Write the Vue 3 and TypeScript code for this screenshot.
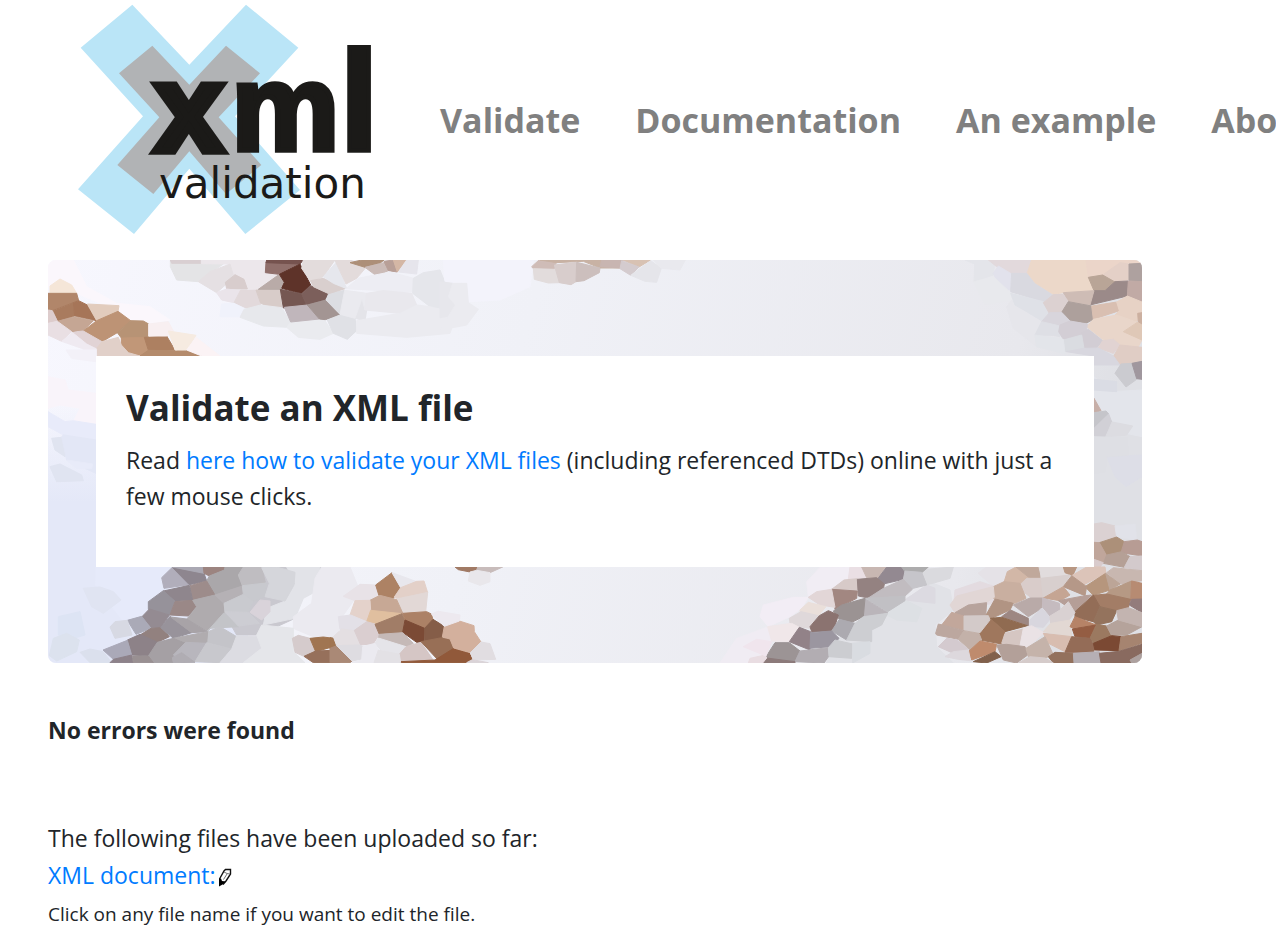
<script setup lang="ts">
interface Cell {
  fill: string
  points: string
}
interface Patch {
  x: number
  y: number
  cells: Cell[]
}

function cells(source: string): Cell[] {
  return source
    .trim()
    .split('\n')
    .map((line) => {
      const [fill, ...points] = line.trim().split(' ')
      return { fill: '#' + fill, points: points.join(' ') }
    })
}

const patches: Patch[] = [
  {
    x: -24,
    y: -30,
    cells: cells(`
      fbf7fc 24,30 100,30 140,110 230,160 330,170 390,210 330,220 270,210 230,180 110,130 24,110
      e4e4e6 391,30 484,40 550,42 510,70 475,95 410,90 391,50
      d9cfd2 391,30 484,30 484,40 395,40
      ece7eb 484,30 680,30 676,68 720,75 655,118 620,115 580,75 570,42 484,41
      e5e0e3 510,65 570,42 580,75 556,105 530,128 475,95
      d8cdcd 556,97 585,74 612,88 622,117 560,117
      eae4ea 530,128 560,117 602,122 582,158 545,150
      e2d9db 602,120 648,120 662,165 612,178 582,158
      d8ccc9 648,120 720,118 725,173 690,172 662,160
      f0f2fb 545,162 582,160 620,178 600,200 540,200
      e7e8ec 612,178 662,165 725,173 752,216 740,232 670,228 600,202
      eaebef 740,232 752,216 850,205 880,250 840,268 775,262
      906f6b 678,36 780,40 718,73 676,68
      76534f 680,30 790,30 780,42 678,38
      b9aba8 718,73 733,97 721,118 655,118
      5e3329 718,73 780,42 812,105 785,131 725,115 733,97
      755752 721,118 785,131 800,165 730,174
      7c5f5b 785,131 812,107 866,131 855,150 800,165
      c0b6bb 733,172 802,165 838,207 752,216
      a39593 802,165 858,150 900,195 856,209 838,207
      dcdde2 866,131 914,121 912,190 900,193 858,150
      e0e1e6 862,210 900,195 945,205 950,242 922,268 880,250
      e4e4e9 945,205 966,145 980,180 975,212
      e3dcdc 790,30 885,30 850,80 812,95 785,55
      d9cfce 812,92 850,85 915,116 866,131 820,110
      e6e7ed 850,80 888,38 920,116 880,100
      e3dbdb 885,30 930,30 980,50 950,85 918,102 888,38
      ad8f78 930,38 965,30 1032,30 1020,40 975,52
      cbbbb7 975,52 1032,38 1045,62 1010,78
      b89f97 1032,34 1060,30 1072,66 1045,62
      d4b7a5 1060,30 1100,30 1072,66
      e6e5ec 1100,30 1135,30 1130,72 1075,66
      ededf3 918,116 955,85 1050,66 1120,85 1115,125 1030,122
      e5e6eb 1120,85 1150,68 1200,60 1216,100 1200,175 1170,170 1118,130
      eaeaef 914,121 980,130 975,180 966,145 945,205 900,193
      e9e8ed 980,130 1030,122 1115,130 1130,165 1080,190 975,180
      ebebf0 950,212 1080,190 1130,165 1170,170 1250,190 1230,250 1100,262 950,250
      f5e6d8 30,108 60,87 95,105 110,130 30,134
      b1866a 24,130 110,130 116,152 100,158 35,182 24,178
      a97b5e 38,182 100,158 104,198 55,214
      a67558 100,158 116,152 142,165 170,212 104,198
      e2ccbd 142,162 237,167 234,184 170,212
      ddcccc 24,180 37,182 52,214 24,220
      c5a694 52,214 104,200 160,212 130,243 95,245 62,225
      bd9375 130,243 170,212 234,184 272,212 232,248 186,275
      b79375 232,248 272,212 310,213 326,222 326,258 300,275 244,264
      c19778 244,264 315,262 325,305 300,318 265,308 244,285
      ad8061 313,262 380,258 405,300 325,301
      b48b6c 300,318 325,301 410,302 435,300 485,318
      e9dfe3 24,220 52,214 95,245 65,274 24,255
      e1d3d5 110,245 130,243 186,275 170,295 140,282 98,248
      e1d0c9 170,295 186,275 235,262 244,285 265,308 300,318 172,318
      efeaf1 65,274 98,248 140,282 170,297 168,318 125,295
      f8eff1 326,222 385,215 400,243 380,258 326,258
      f6ebe1 385,243 468,256 440,300 405,300
      fbf3f5 440,300 468,262 540,318 485,318
    `),
  },
  {
    x: 1176,
    y: -30,
    cells: cells(`
      f3f3fb 10,30 280,30 270,110 180,150 85,155 75,100 15,95
      e7e7ec 0,95 38,100 25,140 46,165 30,197 0,203
      ebebf0 38,100 80,100 85,158 115,178 80,225 0,240 46,165 25,140
      cfbcb7 275,50 297,30 350,35 342,58 280,56
      c8b2a4 300,30 545,30 540,54 480,54 430,34 350,38
      e2dcdc 280,56 345,58 358,98 325,99 283,88
      d8cdcc 343,45 410,37 408,95 393,104 358,98
      ccbfbd 410,37 480,54 478,68 432,92 408,95
      c8b5b1 480,50 485,30 548,30 540,54
      d8c2b3 548,30 632,30 597,51
      d4cbce 545,32 597,51 572,76 540,56
      e5e5ea 572,76 632,32 664,55 650,97 615,94
      e9e9ee 640,30 736,30 720,60 664,55
    `),
  },
  {
    x: 2196,
    y: -30,
    cells: cells(`
      e4e5ea 555,30 645,30 640,75 582,95 584,42
      e2d9dc 625,30 755,30 742,68 695,72 650,50
      e2e2ec 640,70 655,48 695,72 692,120 660,115
      d9d9e0 695,70 742,70 765,98 820,135 790,155 692,125
      e8e9ed 582,95 640,80 692,128 695,150 615,163
      e6e6eb 695,150 740,185 785,212 765,255 770,290 700,235 680,170
      dfe1e7 692,130 790,155 808,185 785,212 740,185 705,165
      ecd8c9 755,30 918,30 942,122 850,128 820,133 765,98 742,68
      ebd5c9 918,30 1075,30 1086,42 1045,40 968,75 925,82
      e4d0c7 968,75 1020,38 1047,42 1045,90 1000,95
      aea19f 1047,42 1086,40 1086,95 1047,92
      b9a597 925,82 968,75 1005,96 975,122 942,122
      9b8a89 930,165 942,122 975,122 1005,95 1045,93 1042,138
      c1aaa5 1045,93 1086,95 1086,156 1042,138
      cebcb5 850,128 942,122 930,165 865,155
      dcd1d1 790,158 820,134 850,133 865,155 845,187 808,190
      ada09c 845,187 865,155 935,168 940,208 920,219 870,213
      d9bfb1 935,168 1010,156 1018,182 940,208
      e7d2c5 1010,156 1042,138 1086,156 1086,190 1070,215 1000,200 1018,182
      e9d6ca 920,230 940,208 1010,195 1080,220 1030,245 1086,270 1075,290 1020,285 968,268
      dfc8b7 1030,245 1075,215 1086,222 1086,270
      ccb0a0 1073,190 1086,188 1086,222 1075,215
      d8d5dc 785,215 808,188 845,187 870,213 840,228
      dedfe5 765,255 785,215 840,228 840,260 820,256
      d3ced5 840,225 870,213 922,222 920,238 905,255 850,268 836,245
      d2cdd4 905,250 925,238 968,272 945,300 912,293
      dadce1 843,272 905,255 912,295 855,305
      e3e5ea 765,255 850,268 855,310 770,290
      e1d3d2 955,294 968,272 1000,268 1020,285 1000,310
      e0cdc5 1000,320 1020,285 1086,292 1086,330 1055,345 1020,345
      d8d7df 860,305 912,295 955,294 1000,318 1020,345 942,345 942,318
    `),
  },
  {
    x: 3096,
    y: 240,
    cells: cells(`
      e3e5eb 42,110 95,155 186,150 186,290 90,270 65,210 42,170
      cbcbd0 105,100 123,72 156,70 170,118 138,141
      a0979e 156,70 186,64 186,118 170,116
      c7afa8 42,175 63,212 42,218
      c5c5ca 42,218 78,213 86,222 42,265
      d1d0d6 42,265 86,222 96,248 77,290 42,292
      dcdce1 86,270 96,246 158,258 140,285 77,290
      dddee7 80,350 186,345 186,410 138,440 105,410
      dadce4 42,118 110,125 110,155 42,150
      dedfe4 42,290 140,293 145,345 80,350 75,395 42,400
    `),
  },
  {
    x: -24,
    y: 270,
    cells: cells(`
      f3f1f8 78,0 168,0 168,35 95,25
      f9f4fa 24,80 75,90 85,120 168,130 168,222 100,215 120,175 60,165 24,175
      e8ebfa 24,185 75,215 100,212 168,223 168,270 70,255 24,230
      e0e4f0 35,265 65,262 93,300 75,320 45,300
      e0e4f1 30,350 60,342 125,375 130,392 50,395
      e3e7f6 70,255 168,270 168,370 80,330 65,260
      e8ebf9 80,330 158,342 155,356 110,355
    `),
  },
  {
    x: -24,
    y: 885,
    cells: cells(`
      e6eafa 168,36 395,36 365,70 370,108 325,140 325,180 250,200 165,90
      e0e4f2 130,100 180,96 220,110 243,135 190,175 155,155
      dde4f4 55,185 120,170 135,240 100,250 55,240
      dce2ee 40,250 80,235 118,255 110,290 50,318 28,302
      dbe0ed 120,292 150,282 190,290 215,323 150,323
      c9c8cf 560,36 850,36 830,75 840,100 780,130 765,190 700,220 660,240 590,240 550,170 595,65
      e2e3e8 740,36 840,36 830,75 845,100 790,130 765,190 670,210 680,160 735,138 765,85
      ebeaf0 825,70 845,36 930,36 960,110 910,180 890,245 820,245 760,220 760,185 815,145
      b1aebb 372,100 365,68 397,37 448,89
      8e868f 397,37 492,55 500,78 448,89
      aaa8b3 397,36 490,36 492,55
      9c8480 490,36 556,36 553,45 508,63 492,55
      aaa7aa 500,78 508,63 553,45 555,36 610,36 595,65 607,92 525,120
      9d8c8b 450,92 500,78 525,120 458,136
      8f868d 370,108 448,91 458,136 405,139
      96929a 325,140 370,107 405,139 390,180 325,163
      9a8887 390,180 405,140 458,136 470,155 445,183
      afabae 458,136 525,120 552,145 552,175 503,228 440,193 470,155
      b5b1b5 525,120 607,93 612,118 552,145
      bfbdc1 595,60 610,36 665,38 676,82 607,92
      c8c9ce 607,92 680,84 675,125 640,139 610,118
      c9cacf 552,145 610,118 640,140 625,172 555,170
      d9d3da 630,172 660,135 690,138 690,170 665,195
      d5d6db 665,38 710,36 765,52 762,90 735,138 675,125 688,85
      948b92 305,186 328,162 388,180 362,220 333,218
      aaaab7 262,196 305,184 333,220 288,238
      d7d9e3 210,216 225,200 262,196 276,240 225,250
      92817f 300,240 333,220 365,218 388,245 350,263
      98939b 362,218 390,184 455,233 400,250
      a8a3a7 392,186 440,192 503,230 455,233
      c3c4c8 503,228 552,173 595,215 510,220
      cdcdd3 555,170 625,172 658,205 595,213
      c4c4c9 500,232 540,215 590,245 575,282 497,262
      b0acaf 400,250 503,230 500,265 440,265
      8d8288 262,255 300,238 355,263 350,285 325,303 275,300
      aaa9b8 189,285 262,256 275,300 220,313
      a5a0a4 325,303 352,262 400,250 437,265 397,310 400,323 340,323
      b8b6bd 400,300 437,262 500,265 465,320
      c8c8cd 465,320 500,263 575,282 540,323
      8d828a 210,323 220,313 275,300 280,323
      999092 278,303 325,303 340,323 280,323
      b0adb3 400,323 397,308 425,293 465,322
      dcdce2 540,323 575,282 590,242 660,244 665,280 610,323
      e5e6ea 650,240 665,210 760,220 760,290 795,323 610,323 665,280
      d5cbcc 757,250 775,241 810,250 827,290 792,304 765,292
      a07551 810,250 850,246 880,250 890,272 827,290
      96705b 792,304 827,288 875,286 880,323 820,323
      aa8976 875,286 890,272 900,275 900,323 880,323
    `),
  },
  {
    x: 846,
    y: 885,
    cells: cells(`
      a07551 0,248 10,250 20,272 0,282
      aa8976 0,280 20,272 66,318 60,323 0,323
      e8e2e7 40,124 90,88 137,90 147,122 120,135 75,137
      ad8264 137,90 186,53 212,98 190,130 147,122
      e8e7ed 186,53 260,80 212,98
      e3d0c8 212,98 260,79 282,78 293,113 200,130 193,126
      e2d8d6 200,132 293,112 287,170 218,174
      c7a895 120,136 150,121 200,134 218,174 190,180 122,165
      e4d2cb 60,180 75,137 120,136 122,166 110,200
      e0bf9f 110,200 122,166 216,176 135,208
      e3e0e7 25,185 62,180 110,200 75,228 30,224
      e4dfe2 10,245 35,222 75,228 90,270 20,272
      daced0 73,226 110,200 135,207 148,238 130,266 92,270
      a17d67 135,208 216,176 224,195 218,233 148,238
      ac8166 218,175 290,170 304,177 309,194 284,220 225,195
      7b4a35 225,195 284,220 282,260 260,262 218,232
      855d48 284,220 309,193 343,214 337,248 284,260
      c5b9b7 148,238 218,233 250,265 230,275 145,249
      e5e4e9 135,265 145,249 228,275 208,298 150,283
      d5c6c5 208,298 228,275 273,262 308,313 290,318 212,320
      986f56 273,260 335,248 360,252 371,280 324,315
      91593a 212,320 315,315 371,280 418,294 427,313 410,323 210,323
      d3b09d 343,214 388,198 432,212 433,230 453,261 421,293 371,279 360,252 337,246
      e1dde1 421,293 453,261 480,266 497,313 430,315
      dad3d7 410,323 427,314 475,323
      ede9ef 304,177 325,169 390,180 388,198 343,214
      dedce1 20,272 90,270 98,275 95,312 66,318
      ebeaf0 95,315 98,275 135,265 145,285 132,323 66,323
      e3e1e5 132,323 145,285 208,298 212,323
      a17a65 375,36 443,36 440,46 420,51 385,44
      c8bcbb 443,36 518,36 480,53 440,46
      e9e7eb 420,51 440,46 480,53 480,80 450,91 415,78
    `),
  },
  {
    x: 2016,
    y: 750,
    cells: cells(`
      f1edf4 260,215 300,172 390,171 385,208 340,238 265,262
      f2edf5 120,320 130,285 220,262 265,262 245,295 210,320 145,350
      f0ecf3 0,459 50,385 145,350 155,395 140,430 90,459
      e1e2e7 440,350 560,265 640,220 690,240 700,300 645,345 650,410 700,459 320,459 340,390
      dadade 590,180 700,171 690,205 620,225
      dcdae1 555,270 620,225 645,235 645,280
      dde0e4 490,310 555,270 605,295 590,335 530,330
      eadfe4 390,171 425,171 440,203 385,208
      c8b7b2 425,171 497,171 472,208 440,203
      938991 472,208 500,171 545,171 555,185 550,208 490,222
      adacad 545,171 625,171 605,188 555,185
      c6c5ca 550,208 555,183 605,187 620,225 575,236
      d7cac8 335,238 372,210 412,206 415,240
      948281 412,208 470,203 493,222 490,238 445,264 415,258
      c1bcc0 445,264 490,235 550,208 577,238 555,258
      a28781 335,238 412,243 410,265 345,298
      e2d6d7 265,262 290,245 335,238 345,292 300,285
      eadfda 240,300 265,277 318,290 295,317 240,305
      c1c0c4 435,265 555,258 555,272 503,305
      bab5ba 435,267 503,308 430,320
      9b9393 340,303 365,285 435,265 430,320 395,337 358,328
      dfd8da 208,325 243,305 295,317 270,355 235,350 210,340
      8b7370 270,350 298,317 325,302 355,315 340,363 275,365
      acaab0 335,363 358,328 405,340 380,390
      cdced2 405,340 430,320 503,310 485,345 455,360 455,395 380,390
      f0e7e9 143,350 215,340 238,352 210,395 155,393
      928288 208,395 238,352 272,365 270,420
      9b96a0 272,368 335,363 357,385 335,410 270,415
      9c9495 138,440 165,398 208,398 240,423 225,455 155,450
      b2adb2 225,455 240,423 325,413 327,438 312,459
      cccdd1 325,413 345,390 398,402 395,445 327,440
      8c7a7a 128,459 140,444 225,455 225,459
      e9dde2 90,445 135,435 140,444 128,459 85,459
      f0e5ed 70,410 110,388 155,395 138,438
      d9dce1 398,400 450,395 450,430 398,459
      dbd1d2 1122,42 1145,38 1185,48 1190,80 1140,95 1122,95
      e1e2e9 1185,48 1246,42 1250,90 1190,82
      ac9079 1138,98 1190,81 1213,95 1205,125 1160,137
      b79c94 1213,95 1252,90 1266,95 1266,138 1203,128
      c0a69b 1122,97 1138,98 1160,137 1150,158 1122,148
      b5a096 1160,135 1205,125 1230,140 1213,172 1150,160
      d3cacc 1230,140 1266,138 1266,182 1213,172
      d9cbcc 1122,148 1150,158 1140,171 1122,171
      e5e2e7 775,190 800,171 888,171 855,215 822,230
      e3dbe0 705,240 780,215 825,230 820,280 700,300
      d2b7a7 852,217 862,185 888,171 930,205 900,222
      c0a89b 888,171 960,171 960,204 930,205
      e1dcdd 957,171 1030,171 1048,195 965,205
      b89782 1030,171 1070,171 1058,197 1035,188
      dcc4b9 1055,197 1100,171 1155,171 1158,190 1090,225
      c8b7b0 1160,188 1180,173 1266,182 1266,212 1200,222
      b6967d 1095,230 1157,190 1170,240 1120,256
      bca597 1157,190 1200,222 1170,240
      b69984 1170,240 1235,213 1232,268 1160,252
      b78b72 1235,213 1266,220 1266,268 1232,270
      d9ccca 892,232 920,205 963,205 970,264 935,264
      d8cfce 963,205 1050,195 1030,230 970,264
      b59888 1030,230 1055,197 1100,230 1095,257
      c5a593 970,264 1030,230 1050,255 1020,272
      c9afa0 820,230 852,215 900,220 918,265 885,280 820,265
      e1d6d5 690,285 710,258 820,230 823,262 795,280 705,308
      b59e97 1015,272 1095,257 1115,255 1065,305
      a37d66 1120,256 1160,252 1232,268 1225,293 1190,302 1140,290
      936d57 1065,305 1120,255 1140,290 1120,335 1065,322
      94735d 1120,335 1140,290 1190,302 1175,335 1130,345
      937c7c 1228,285 1235,268 1266,267 1266,308
      b7a39c 705,308 745,285 800,278 797,317 715,317
      b19483 797,317 825,267 880,280 870,300 815,325
      b9aaa8 880,285 930,264 968,264 965,295 925,320
      c5bbbf 968,264 1018,280 1020,300 990,318 968,292
      d8d6de 925,335 965,294 992,325 970,352 925,348
      d9d1d2 990,318 1020,300 1045,275 1065,308 1045,332 992,340
      9d8782 845,320 872,300 925,325 925,347
      906b51 810,325 845,322 922,347 855,365
      9f775d 777,373 810,325 855,365 845,402 780,390
      c2a79b 665,345 695,307 732,318 732,360
      d3cac9 732,318 805,317 810,330 780,368 732,360
      bca79f 647,370 655,342 732,362 715,388 650,375
      c3b1a9 715,388 732,362 777,370 785,390 750,420
      d4cacf 655,410 680,385 712,390 745,418 700,430
      bf8b6d 745,425 780,393 830,403 825,425 755,450
      81604b 760,455 825,425 843,440 800,459
      d5c6c2 845,400 855,370 910,357 900,407 860,404
      eae2e5 900,407 910,355 935,347 972,368 920,415
      e2d8d3 970,365 992,340 1050,330 1055,380
      d8bdb0 970,370 1055,380 1035,425 985,400
      b3a099 830,405 860,403 915,410 923,435 890,459 850,450
      c5b3aa 918,415 975,380 998,430 980,443 925,440
      b68367 1050,350 1065,320 1128,345 1060,355
      945d43 1057,357 1128,345 1110,385 1065,380
      9b7960 1110,385 1130,343 1160,348 1175,377 1120,400
      b5a39b 1160,348 1195,330 1266,350 1220,375 1175,377
      c3b4b0 1190,302 1225,293 1266,308 1266,350 1195,330
      946c57 1035,427 1055,380 1110,385 1125,415 1120,427
      7b4933 1120,400 1175,377 1203,380 1197,422 1125,420
      a68470 1203,380 1266,370 1266,400 1197,422
      93715d 985,440 1005,427 1060,430 1062,459 1000,459
      b6afb4 1060,430 1138,425 1143,459 1062,459
      896a5f 1138,430 1197,424 1266,403 1266,430 1230,450 1235,459 1143,459
      ada19f 1230,450 1266,430 1266,459 1235,459
      d5cbca 895,459 930,440 975,444 1000,459
      ddd8dd 675,440 700,425 745,420 752,452 715,448
    `),
  },
]

const links = ['Validate', 'Documentation', 'An example', 'About']
</script>

<template>
  <div class="page">
    <header class="top">
      <a class="brand" href="#" aria-label="xml validation">
        <svg class="logo" viewBox="0 0 990 720" aria-hidden="true">
          <polygon
            fill="#bae5f7"
            points="217,14 388,194 558,14 715,143 525,349 720,570 556,702 388,506 222,702 54,568 249,349 62,143"
          />
          <polygon
            fill="#b1b3b5"
            points="277,137 388,254 498,137 600,220 476,352 604,495 498,582 388,454 280,582 172,495 298,352 177,220"
          />
          <text class="mark">
            <tspan class="mark-x" x="283" y="453">x</tspan>
            <tspan class="mark-m" x="514" y="451">m</tspan>
            <tspan class="mark-l" x="838" y="453">l</tspan>
          </text>
          <text class="word" x="297" y="594">validation</text>
        </svg>
      </a>
      <nav class="nav">
        <a v-for="link in links" :key="link" href="#">{{ link }}</a>
      </nav>
    </header>

    <main class="content">
      <section class="hero">
        <svg class="mosaic" viewBox="0 0 3282 1209" preserveAspectRatio="xMidYMid slice" aria-hidden="true">
          <defs>
            <linearGradient id="base" x1="0" y1="0" x2="1" y2="0.1">
              <stop offset="0" stop-color="#f7f7fe" />
              <stop offset="0.45" stop-color="#f0f1f7" />
              <stop offset="0.9" stop-color="#e8e8ed" />
              <stop offset="1" stop-color="#dfe0e5" />
            </linearGradient>
            <linearGradient id="cool" x1="0" y1="0" x2="0" y2="1">
              <stop offset="0.35" stop-color="#e4e8f8" stop-opacity="0" />
              <stop offset="0.6" stop-color="#e4e8f8" />
            </linearGradient>
          </defs>
          <rect width="3282" height="1209" fill="url(#base)" />
          <rect width="600" height="1209" fill="url(#cool)" />
          <g v-for="(patch, i) in patches" :key="i" :transform="`translate(${patch.x} ${patch.y})`">
            <polygon
              v-for="(cell, j) in patch.cells"
              :key="j"
              :points="cell.points"
              :fill="cell.fill"
              :stroke="cell.fill"
              stroke-width="3"
              stroke-linejoin="round"
            />
          </g>
        </svg>
        <div class="card">
          <h1>Validate an XML file</h1>
          <p>
            Read <a href="#">here how to validate your XML files</a> (including referenced DTDs) online with just a few
            mouse clicks.
          </p>
        </div>
      </section>

      <p class="result"><strong>No errors were found</strong></p>

      <section class="files">
        <p>The following files have been uploaded so far:</p>
        <p class="file">
          <a href="#">XML document:</a>
          <svg class="pencil" viewBox="0 0 14 20" aria-hidden="true">
            <path d="M1.5 12 6 4 7.500 2.500H12.500V7L8 14 5 17.500" fill="#fff" stroke="#111" stroke-width="1.400" />
            <path d="M6 5l3 1.500 3 .5M5.500 12.500 9 7" fill="none" stroke="#777" />
            <path d="M1 11.500h2l1 2.500 4 .5-3.500 3L1 19.500z" fill="#000" />
          </svg>
        </p>
        <p class="hint">Click on any file name if you want to edit the file.</p>
      </section>
    </main>
  </div>
</template>

<style>
body {
  margin: 0;
  background: #fff;
}
</style>

<style scoped>
.page {
  overflow: hidden;
  color: #212529;
  font-family: 'Open Sans', 'Noto Sans', sans-serif;
  font-size: 23px;
  line-height: 36px;
}
p,
h1 {
  margin: 0;
}
a {
  color: #007bff;
  text-decoration: none;
}
.top {
  display: flex;
  align-items: center;
  padding-left: 60px;
}
.brand {
  flex: none;
  width: 330px;
}
.logo {
  display: block;
  width: 100%;
}
.mark {
  font-family: 'Liberation Sans', Arial, sans-serif;
  font-weight: 700;
  fill: #1b1a18;
  stroke: #1b1a18;
}
.mark-x {
  font-size: 375px;
  stroke-width: 22px;
}
.mark-m {
  font-size: 365px;
  stroke-width: 16px;
}
.mark-l {
  font-size: 430px;
  stroke-width: 12px;
}
.word {
  font-family: 'DejaVu Sans', sans-serif;
  font-size: 126px;
  fill: #1b1a18;
}
.nav {
  display: flex;
  flex: none;
  gap: 55px;
  margin-left: 50px;
}
.nav a {
  color: #808080;
  font-size: 34px;
  font-weight: 700;
  white-space: nowrap;
}
.content {
  padding: 20px 134px 24px 48px;
}
.hero {
  position: relative;
  overflow: hidden;
  padding: 96px 48px;
  border-radius: 8px;
}
.mosaic {
  position: absolute;
  inset: 0;
  width: 100%;
  height: 100%;
}
.card {
  position: relative;
  padding: 30px 30px 53px;
  background: #fff;
}
.card h1 {
  margin-bottom: 12px;
  font-size: 35px;
  font-weight: 700;
  line-height: 44px;
}
.result {
  margin-top: 49px;
}
.files {
  margin-top: 72px;
}
.file {
  display: flex;
  align-items: center;
  gap: 2px;
  margin-top: 1px;
}
.pencil {
  width: 14px;
  height: 20px;
  margin-top: 4px;
}
.hint {
  margin-top: 3px;
  font-size: 19px;
}
</style>
